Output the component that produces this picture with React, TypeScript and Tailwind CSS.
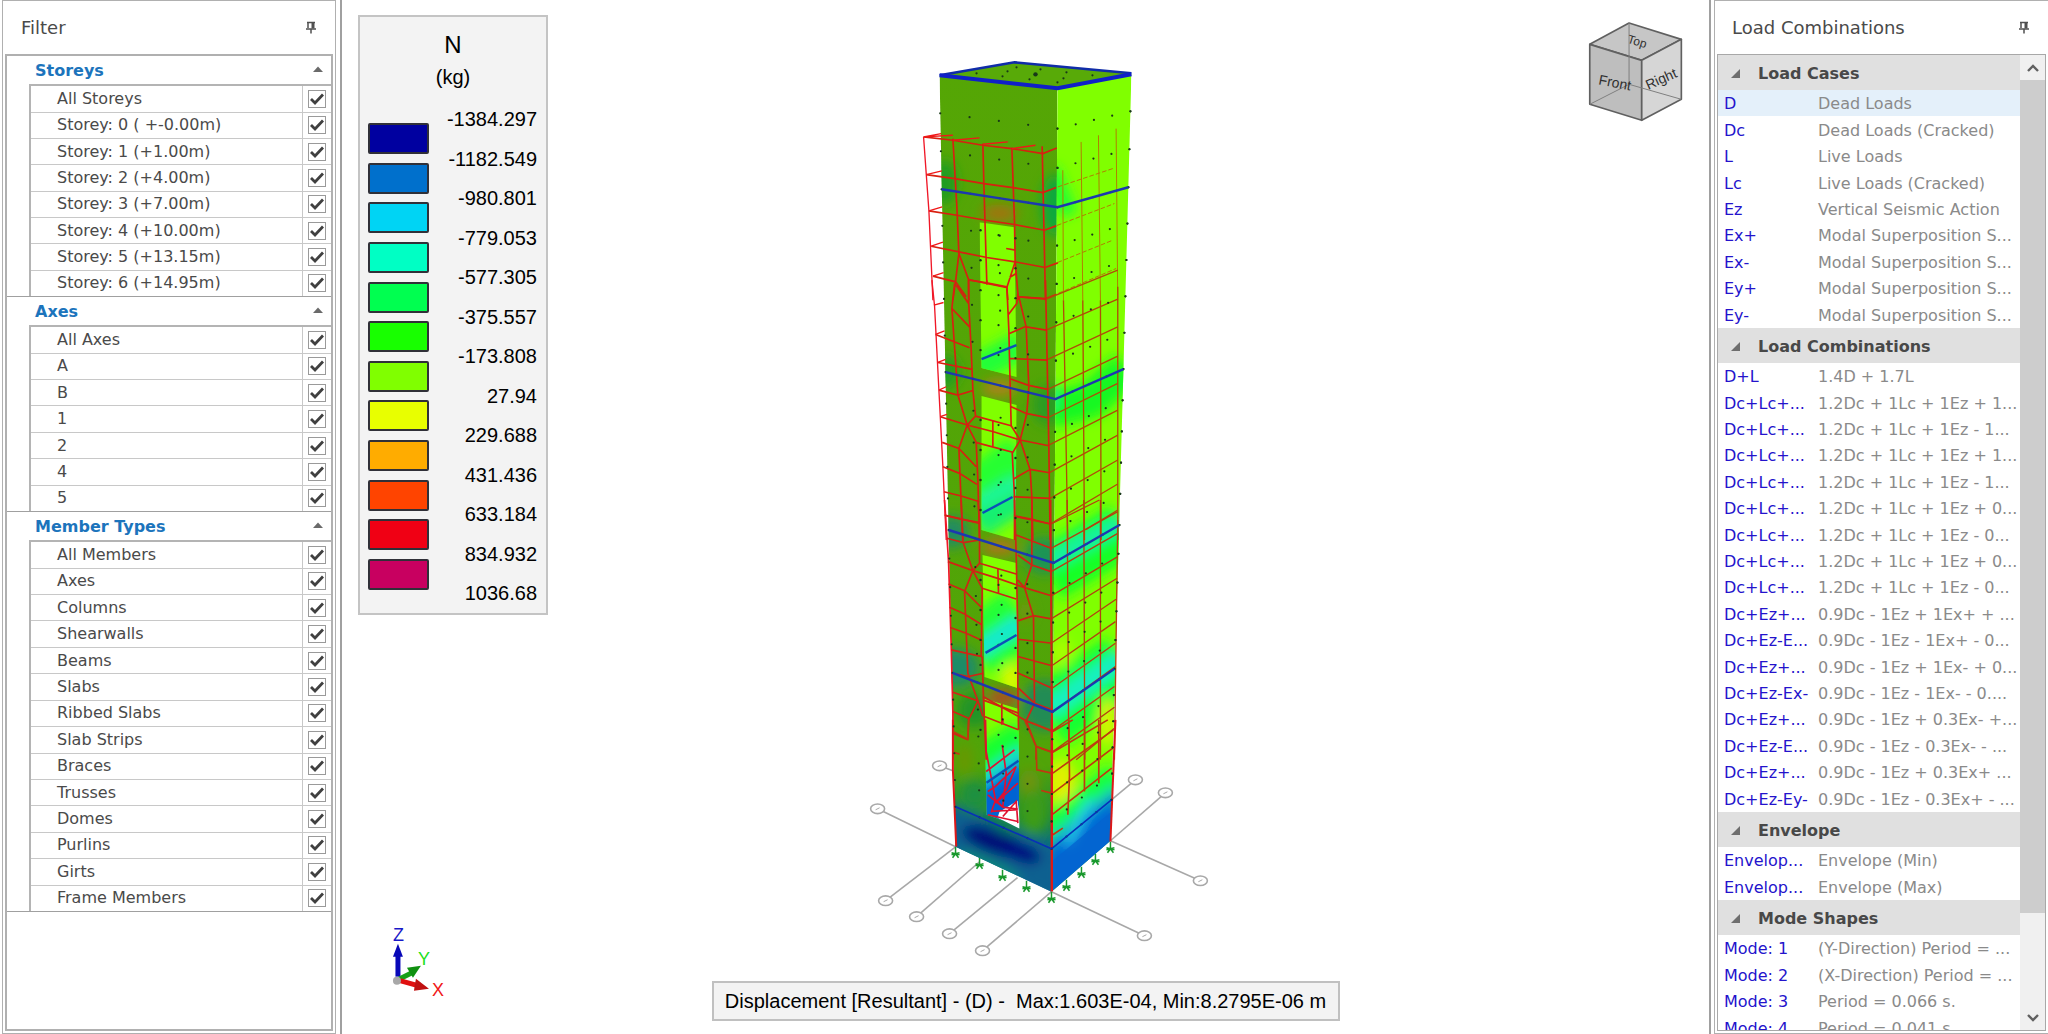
import React from "react";

const storeys = [
  "All Storeys",
  "Storey: 0 ( +-0.00m)",
  "Storey: 1 (+1.00m)",
  "Storey: 2 (+4.00m)",
  "Storey: 3 (+7.00m)",
  "Storey: 4 (+10.00m)",
  "Storey: 5 (+13.15m)",
  "Storey: 6 (+14.95m)",
];
const axes = ["All Axes", "A", "B", "1", "2", "4", "5"];
const members = [
  "All Members",
  "Axes",
  "Columns",
  "Shearwalls",
  "Beams",
  "Slabs",
  "Ribbed Slabs",
  "Slab Strips",
  "Braces",
  "Trusses",
  "Domes",
  "Purlins",
  "Girts",
  "Frame Members",
];

type Pair = [string, string];
const loadCases: Pair[] = [
  ["D", "Dead Loads"],
  ["Dc", "Dead Loads (Cracked)"],
  ["L", "Live Loads"],
  ["Lc", "Live Loads (Cracked)"],
  ["Ez", "Vertical Seismic Action"],
  ["Ex+", "Modal Superposition S..."],
  ["Ex-", "Modal Superposition S..."],
  ["Ey+", "Modal Superposition S..."],
  ["Ey-", "Modal Superposition S..."],
];
const combos: Pair[] = [
  ["D+L", "1.4D + 1.7L"],
  ["Dc+Lc+...", "1.2Dc + 1Lc + 1Ez + 1..."],
  ["Dc+Lc+...", "1.2Dc + 1Lc + 1Ez - 1..."],
  ["Dc+Lc+...", "1.2Dc + 1Lc + 1Ez + 1..."],
  ["Dc+Lc+...", "1.2Dc + 1Lc + 1Ez - 1..."],
  ["Dc+Lc+...", "1.2Dc + 1Lc + 1Ez + 0..."],
  ["Dc+Lc+...", "1.2Dc + 1Lc + 1Ez - 0..."],
  ["Dc+Lc+...", "1.2Dc + 1Lc + 1Ez + 0..."],
  ["Dc+Lc+...", "1.2Dc + 1Lc + 1Ez - 0..."],
  ["Dc+Ez+...", "0.9Dc - 1Ez + 1Ex+ + ..."],
  ["Dc+Ez-E...", "0.9Dc - 1Ez - 1Ex+ - 0..."],
  ["Dc+Ez+...", "0.9Dc - 1Ez + 1Ex- + 0..."],
  ["Dc+Ez-Ex-", "0.9Dc - 1Ez - 1Ex- - 0...."],
  ["Dc+Ez+...", "0.9Dc - 1Ez + 0.3Ex- +..."],
  ["Dc+Ez-E...", "0.9Dc - 1Ez - 0.3Ex- - ..."],
  ["Dc+Ez+...", "0.9Dc - 1Ez + 0.3Ex+ ..."],
  ["Dc+Ez-Ey-", "0.9Dc - 1Ez - 0.3Ex+ - ..."],
];
const envelopes: Pair[] = [
  ["Envelop...", "Envelope (Min)"],
  ["Envelop...", "Envelope (Max)"],
];
const modes: Pair[] = [
  ["Mode: 1", "(Y-Direction) Period = ..."],
  ["Mode: 2", "(X-Direction) Period = ..."],
  ["Mode: 3", "Period = 0.066 s."],
  ["Mode: 4", "Period = 0.041 s."],
];

function PinButton({ label }: { label: string }) {
  return (
    <button type="button" aria-label={label} className="flex size-4 items-center justify-center">
      <svg viewBox="0 0 12 13" className="h-[13px] w-3" fill="none" stroke="#505050">
        <path d="M3 1v6M2 1.5h8M1 8h10M6 8v4.5" strokeWidth="1.5" />
        <path d="M8 1v6.5" strokeWidth="3" />
      </svg>
    </button>
  );
}

function PanelTitle({ title, pad }: { title: string; pad: string }) {
  return (
    <header className={"flex h-[53px] shrink-0 items-center justify-between text-lg text-[#4a4a4a] " + pad}>
      <h2>{title}</h2>
      <PinButton label={"Pin " + title} />
    </header>
  );
}

function FilterSection({ title, items, bodyHeight }: { title: string; items: string[]; bodyHeight: string }) {
  return (
    <section className="border-b border-[#a0a0a0]">
      <button type="button" aria-expanded="true" className="flex h-7 w-full items-center justify-between pt-0.5 pr-2 pl-7">
        <span className="text-base font-bold text-[#1c74bc]">{title}</span>
        <svg viewBox="0 0 10 6" className="mb-1 h-1.5 w-2.5">
          <path d="M0 6 5 0.5 10 6z" fill="#6a6a6a" />
        </svg>
      </button>
      <div className="pl-[22px]">
        <table className={"w-full border-t-2 border-l-2 border-[#b4b4b4] " + bodyHeight}>
          <tbody>
            {items.map((name, i) => {
              const id = title.replace(" ", "-") + "-" + i;
              return (
                <tr key={id} className="border-t border-[#c8c8c8] first:border-t-0">
                  <th scope="row" className="p-0 pl-[26px] text-left text-base leading-5 font-normal whitespace-pre text-[#4a4a4a]">
                    <label htmlFor={id}>{name}</label>
                  </th>
                  <td className="w-[29px] border-l border-[#c8c8c8] p-0">
                    <span className="grid place-items-center">
                      <input
                        id={id}
                        type="checkbox"
                        defaultChecked
                        className="peer col-start-1 row-start-1 size-[18px] appearance-none border border-[#9a9a9a] bg-white"
                      />
                      <svg viewBox="0 0 14 12" className="pointer-events-none invisible col-start-1 row-start-1 h-3 w-3.5 peer-checked:visible">
                        <path d="M1 6 5 10 13 1.5" fill="none" stroke="#404040" strokeWidth="2.8" />
                      </svg>
                    </span>
                  </td>
                </tr>
              );
            })}
          </tbody>
        </table>
      </div>
    </section>
  );
}

function LoadSection({ title, items, bodyHeight, active }: { title: string; items: Pair[]; bodyHeight: string; active?: number }) {
  return (
    <section>
      <button type="button" aria-expanded="true" className="flex h-[35px] w-full items-center gap-[18px] bg-[#e0e0e0] pt-0.5 pl-[13px]">
        <svg viewBox="0 0 9 9" className="size-[9px]">
          <path d="M9 0v9H0z" fill="#6e6e6e" />
        </svg>
        <span className="text-base font-bold text-[#484848]">{title}</span>
      </button>
      <table className={"w-full table-fixed " + bodyHeight}>
        <tbody>
          {items.map(([code, text], i) => (
            <tr key={i} className={i === active ? "bg-[#e4f0fa]" : ""}>
              <th scope="row" className="w-[99px] p-0 pt-0.5 pl-1.5 text-left text-base leading-5 font-normal whitespace-nowrap text-[#2413cc]">
                {code}
              </th>
              <td className="overflow-hidden p-0 pt-0.5 pl-px text-base leading-5 whitespace-nowrap text-[#8a8a8a]">{text}</td>
            </tr>
          ))}
        </tbody>
      </table>
    </section>
  );
}

const swatches = [
  "bg-[#0000a0]",
  "bg-[#0070cc]",
  "bg-[#00d4f4]",
  "bg-[#00ffc4]",
  "bg-[#00ff50]",
  "bg-[#18ff00]",
  "bg-[#80ff00]",
  "bg-[#e8ff00]",
  "bg-[#ffac00]",
  "bg-[#ff4400]",
  "bg-[#f00014]",
  "bg-[#c80060]",
];
const values = [
  "-1384.297",
  "-1182.549",
  "-980.801",
  "-779.053",
  "-577.305",
  "-375.557",
  "-173.808",
  "27.94",
  "229.688",
  "431.436",
  "633.184",
  "834.932",
  "1036.68",
];

function Legend() {
  return (
    <aside className="absolute top-[15px] left-4 w-[190px] border-2 border-[#c4c4c4] bg-[#f3f3f3] pb-2 text-black">
      <div className="flex flex-col items-center pt-3.5">
        <span className="text-2xl leading-7">N</span>
        <span className="text-xl leading-9">(kg)</span>
      </div>
      <div className="flex h-[510px] justify-between pr-[9px] pl-2">
        <div className="flex flex-col justify-between pt-[28px] pb-[15px]">
          {swatches.map((c) => (
            <span key={c} className={"h-[31px] w-[61px] rounded-xs border-2 border-[#303038] " + c} />
          ))}
        </div>
        <div className="flex flex-col justify-between pt-3 text-right text-xl leading-6">
          {values.map((v) => (
            <span key={v}>{v}</span>
          ))}
        </div>
      </div>
    </aside>
  );
}

type P = [number, number];
const mix = (a: P, b: P, t: number): P => [a[0] + (b[0] - a[0]) * t, a[1] + (b[1] - a[1]) * t];
/* Storey levels as left edge, front corner and right edge points. */
const levels: P[][] = [
  [[940, 75], [1058, 89], [1132, 73]],
  [[942, 189], [1058, 207], [1129, 187]],
  [[946, 372], [1056, 399], [1124, 369]],
  [[949, 530], [1054, 563], [1120, 525]],
  [[953, 673], [1053, 712], [1115, 669]],
  [[956, 807], [1052, 849], [1112, 800]],
];
const divisions = [3, 5, 5, 5, 5];

function nodeDots() {
  const dots: P[] = [];
  for (let i = 0; i < 5; i++) {
    for (let k = 1; k <= divisions[i]; k++) {
      const t = k / divisions[i];
      const l = mix(levels[i][0], levels[i + 1][0], t);
      const c = mix(levels[i][1], levels[i + 1][1], t);
      const r = mix(levels[i][2], levels[i + 1][2], t);
      for (let j = 0; j < 5; j++) {
        dots.push(mix(l, c, j / 4));
        dots.push(mix(c, r, j / 4));
      }
      dots.push(r);
    }
  }
  return dots;
}

const supports: P[] = [
  [956, 847], [980, 858], [1003, 870], [1027, 881], [1052, 892], [1067, 880], [1082, 867], [1096, 854], [1111, 842],
];
const gridLines: [number, number, number, number][] = [
  [956, 847, 886, 901], [980, 862, 917, 917], [1018, 878, 950, 934], [1052, 892, 983, 951],
  [956, 847, 878, 809], [1052, 892, 1145, 936], [1111, 841, 1201, 881], [1111, 841, 1166, 793],
  [1112, 800, 1136, 780], [956, 772, 940, 766],
];

function Tower() {
  return (
    <g>
      <g stroke="#a8a8a8" fill="none" strokeWidth="1.6">
        {gridLines.map((g, i) => (
          <g key={i}>
            <line x1={g[0]} y1={g[1]} x2={g[2]} y2={g[3]} />
            <ellipse cx={g[2]} cy={g[3]} rx="7" ry="4.8" fill="#fff" />
            <path d={`M${g[2] - 2} ${g[3] + 1}l4 -2`} strokeWidth="1" />
          </g>
        ))}
      </g>
      <g stroke="#18982c" strokeWidth="1.5" fill="none">
        {supports.map(([x, y], i) => (
          <path key={i} d={`M${x} ${y}v8M${x - 4} ${y + 6}l8 2M${x + 4} ${y + 6}l-8 2M${x} ${y + 7}l-3 4M${x} ${y + 7}l3 4`} />
        ))}
      </g>

      <polygon points="940,75 1015,62 1132,73 1058,89" fill="#58aa08" />
      <g clipPath="url(#leftFace)">
        <rect x="930" y="60" width="140" height="840" fill="url(#leftGrad)" />
        <g filter="url(#soft)">
          <ellipse cx="945" cy="182" rx="12" ry="22" fill="#1f9c20" />
          <ellipse cx="1056" cy="205" rx="14" ry="30" fill="#10a83c" />
          <ellipse cx="1000" cy="213" rx="18" ry="9" fill="#a07410" />
          <ellipse cx="946" cy="372" rx="14" ry="16" fill="#249c20" />
          <ellipse cx="1050" cy="405" rx="18" ry="20" fill="#2c9c20" />
          <ellipse cx="1000" cy="388" rx="18" ry="9" fill="#a88414" />
          <ellipse cx="953" cy="532" rx="16" ry="16" fill="#208c60" />
          <ellipse cx="1045" cy="556" rx="20" ry="18" fill="#1c9454" />
          <ellipse cx="1000" cy="547" rx="18" ry="9" fill="#a87818" />
          <ellipse cx="956" cy="668" rx="24" ry="20" fill="#1c8c68" />
          <ellipse cx="975" cy="710" rx="18" ry="18" fill="#209428" />
          <ellipse cx="1045" cy="706" rx="24" ry="26" fill="#208c54" />
          <ellipse cx="1003" cy="698" rx="16" ry="8" fill="#b04c20" />
          <ellipse cx="1026" cy="612" rx="6" ry="10" fill="#7c9008" />
          <ellipse cx="1030" cy="785" rx="10" ry="16" fill="#709408" />
          <ellipse cx="965" cy="760" rx="8" ry="16" fill="#689800" />
          <ellipse cx="975" cy="795" rx="14" ry="14" fill="#1c9040" />
          <ellipse cx="1034" cy="812" rx="14" ry="22" fill="#3c9c18" />
          <polygon points="940,800 985,818 1060,850 1060,900 940,850" fill="#086090" />
          <ellipse cx="1003" cy="832" rx="14" ry="7" fill="#108060" />
          <ellipse cx="995" cy="842" rx="34" ry="12" fill="#001078" transform="rotate(20 995 842)" />
          <ellipse cx="1022" cy="853" rx="20" ry="9" fill="#000080" transform="rotate(20 1022 853)" />
          <ellipse cx="990" cy="866" rx="34" ry="7" fill="#0c8878" transform="rotate(25 990 866)" />
        </g>
      </g>
      <g clipPath="url(#rightFace)">
        <rect x="1045" y="60" width="100" height="840" fill="#80ff00" />
        <g filter="url(#soft)" fill="none">
          <path d="M1052 195 1068 188" stroke="#20ff30" strokeWidth="50" />
          <path d="M1048 410 1092 400 1128 368" stroke="#18f820" strokeWidth="36" />
          <path d="M1050 385v24" stroke="#20f088" strokeWidth="14" />
          <path d="M1048 575 1124 530" stroke="#18ff28" strokeWidth="56" />
          <path d="M1048 562 1124 522" stroke="#18f0a0" strokeWidth="18" />
          <path d="M1048 718 1124 665" stroke="#18ff30" strokeWidth="66" />
          <path d="M1048 710 1124 658" stroke="#18f0c0" strokeWidth="22" />
          <ellipse cx="1108" cy="722" rx="9" ry="24" fill="#d4f400" />
          <ellipse cx="1062" cy="782" rx="14" ry="22" fill="#e0f000" />
          <ellipse cx="1062" cy="652" rx="10" ry="14" fill="#a8ff00" />
          <path d="M1048 834 1118 776" stroke="#18ff40" strokeWidth="30" />
          <path d="M1048 844 1118 790" stroke="#18c8b8" strokeWidth="12" />
          <polygon points="1045,850 1120,792 1120,860 1050,905" fill="#0468d4" />
          <path d="M1092 800 1068 846" stroke="#20c8ec" strokeWidth="8" />
        </g>
        <polygon points="1052,862 1112,812 1112,845 1052,895" fill="#0464d0" opacity=".8" />
      </g>

      <g clipPath="url(#openings)">
        <rect x="975" y="200" width="50" height="640" fill="#80ff00" />
        <g filter="url(#soft)" fill="none">
          <path d="M975 370 1022 345" stroke="#20ff38" strokeWidth="28" />
          <path d="M975 490 1022 455" stroke="#28ff30" strokeWidth="44" />
          <path d="M975 520 1022 490" stroke="#18f070" strokeWidth="40" />
          <path d="M975 505 1022 480" stroke="#20f8a0" strokeWidth="10" />
          <path d="M975 650 1022 615" stroke="#20ff38" strokeWidth="60" />
          <path d="M975 653 1022 622" stroke="#18e8d0" strokeWidth="18" />
          <ellipse cx="1012" cy="680" rx="10" ry="16" fill="#d8f800" />
          <path d="M975 765 1025 735" stroke="#18ff30" strokeWidth="32" />
          <path d="M975 788 1025 752" stroke="#18d8d0" strokeWidth="16" />
          <polygon points="970,796 1030,756 1030,840 970,840" fill="#0464d4" />
        </g>
        <polygon points="1000,812 1018,801 1022,830 998,818" fill="#fff" />
      </g>

      <g transform="translate(900 40) scale(.33333)" fill="none" stroke="#d82010" strokeWidth="5">
        <g stroke="#b08000" strokeWidth="3">
          <path d="M490 390 492 780M545 305 550 780M597 285 603 780M650 265 655 780" />
          <path d="M475 440 640 385M435 570 645 490M437 682 640 600M440 775 650 685" strokeDasharray="14 6" />
        </g>
        <path d="M160 295 172 500 178 640 207 718 208 780M250 310 253 430 262 733M337 322 345 545 347 665 357 780M428 318 438 780" />
        <path d="M72 290 160 300 250 315 337 325 430 340 472 323M80 403 165 415 253 430 340 442 430 457 470 442M88 512 172 525 258 540 345 553 435 570 470 557M95 618 178 635 262 652 347 665 437 682 475 668M100 708 168 725 200 770M178 640 168 725 160 780M207 718 262 730 322 742 347 665M322 742 325 780M330 712 350 700M320 625 348 630M357 770 440 775 470 763" />
        <path d="M72 290 125 280M72 290 160 285M160 300 240 293M250 312 325 305M337 325 408 315M80 403 127 392M88 512 128 500M95 618 130 606M100 708 132 697" stroke="#f01818" strokeWidth="4" />
        <path d="M72 290 88 512 100 780" stroke="#f01828" strokeWidth="4" />
      </g>

      <g transform="translate(900 280) scale(.33333)" fill="none" stroke="#d82010" strokeWidth="5">
        <g stroke="#b04c08" strokeWidth="4">
          <path d="M492 60 505 780M550 60 555 780M603 60 605 780M655 20 655 780" />
          <path d="M440 57 655 -30M440 150 655 57M440 240 655 140M445 328 655 228M445 413 655 310M445 497 655 390M450 578 655 465M452 655 655 540M452 732 655 612M560 748 655 690" />
        </g>
        <path d="M165 10 157 85 165 200 175 345 203 435 230 487 235 600 240 780M203 435 178 505 187 720 190 780M207 60 215 210 220 330 228 408 203 435M207 0 207 70 170 15M157 85 210 140M108 163 210 203M115 247 218 268M118 330 175 345 218 332M122 410 203 435 282 455 362 480 448 497M128 487 178 505 230 560M130 560 180 580 232 613M133 635 185 648 240 665M138 707 188 718 240 728" />
        <path d="M322 20 328 150 332 320 335 437 362 480 392 570 397 650 400 780M358 50 380 140 388 320 382 400 362 480M358 50 440 57M380 140 440 150M330 160 380 138M330 235 443 240M330 295 385 315 445 328M335 380 380 400 445 413M392 568 450 578M342 597 392 568M342 650 452 655M348 708 398 718 452 732M325 105 352 70 355 40" />
        <path d="M228 408 335 437M228 487 340 517 362 480M280 420 280 503M338 517 345 650 345 780M262 0 262 12M210 0 262 8 322 20" />
        <path d="M438 0 443 240 448 497 452 780" />
        <path d="M97 0 105 78 118 330 130 560 140 780" stroke="#f01828" strokeWidth="4" />
        <path d="M103 75 132 67M108 163 135 152M115 247 138 238M118 330 140 320M122 410 142 403" stroke="#f01818" strokeWidth="4" />
      </g>

      <g transform="translate(900 500) scale(.33333)" fill="none" stroke="#d02414" strokeWidth="5">
        <g stroke="#b44010" strokeWidth="4">
          <path d="M503 0 508 780M553 0 556 780M603 0 603 780M655 60 645 780" />
          <path d="M455 72 600 0M455 145 655 35M455 215 655 100M455 288 655 170M455 357 653 235M455 430 650 298M458 497 648 365M458 565 648 430M458 637 648 500M458 693 645 560M458 757 645 622M530 780 645 685" />
        </g>
        <path d="M135 0 147 185 155 440 160 640 160 780" stroke="#f01828" />
        <path d="M185 0 190 125 220 212 248 265 245 470M220 212 195 275 205 520 235 603 250 650M220 212 240 190 240 60 235 0M135 45 240 70M142 115 192 128 240 120M145 185 220 212 297 236 375 263 458 288M147 252 195 272 245 322M150 322 195 342 248 375M152 383 200 400 248 422M155 450 248 470M160 520 205 530 252 520M160 577 235 603M235 603 207 660 205 720M160 635 207 655M160 700 205 720" />
        <path d="M345 0 350 160 355 400 355 560 357 690M350 50 397 60 455 72M350 105 455 145M355 165 397 195 455 215M397 0 397 195 375 263 402 350 405 610 380 663 410 740 410 780M355 240 375 263M357 362 402 347 455 357M357 418 458 430M355 470 455 497M357 520 458 565M357 565 405 610 458 630M250 590 380 663M410 740 458 757M380 663 458 693" />
        <path d="M240 190 350 222M248 265 350 297M295 205 297 280M250 600 357 640M255 650 357 690M307 612 307 675M248 470 252 600 260 780" />
        <path d="M453 0 458 780" strokeWidth="6" />
      </g>

      <g transform="translate(860 720) scale(.33333)" fill="none" stroke="#dc1818" strokeWidth="5">
        <path d="M280 0 280 150 290 380" strokeWidth="6" />
        <g stroke="#c03810">
          <path d="M628 0 630 170 625 285M675 0 675 215M718 0 718 190" />
          <path d="M580 35 640 0M580 97 745 0M580 160 762 30M580 220 760 85M580 283 757 145M580 345 610 325" />
          <path d="M280 35 325 58 328 0M280 97 300 103M495 0 530 80 532 150 577 160M530 80 577 97M520 10 577 35M545 212 577 220" />
        </g>
        <path d="M378 0 380 95 408 240 395 278M430 0 430 12M428 75 440 160 430 260M385 215 408 200 470 140M380 155 465 90M475 190 408 250 440 210 470 140M385 285 475 305M395 275 475 270M430 290 470 245 475 310M408 240 430 262 475 268M385 225 430 262" stroke="#e01030" />
        <path d="M577 0 577 515" strokeWidth="7" />
        <path d="M768 0 753 365" strokeWidth="6" />
      </g>

      <g fill="#183818">
        {nodeDots().map(([x, y], i) => (
          <circle key={i} cx={x} cy={y} r="1.1" />
        ))}
        {[[977, 73], [1003, 76], [1017, 67], [1041, 69], [1067, 72], [1093, 75], [1064, 78], [1030, 79], [1008, 71], [1058, 82]].map(([x, y]) => (
          <circle key={x} cx={x} cy={y} r="1.1" />
        ))}
        {[230, 260, 290, 320, 350, 420, 450, 480, 510, 580, 610, 640, 665, 730].map((y) => (
          <g key={y}>
            <circle cx="981" cy={y} r="1.2" />
            <circle cx="999" cy={y + 5} r="1.1" />
            <circle cx="1016" cy={y + 8} r="1.2" />
          </g>
        ))}
        <circle cx="1036" cy="74" r="2.2" />
      </g>

      <g fill="none" stroke="#1c38b0" strokeWidth="2.4">
        {levels.slice(1, 5).map((l, i) => (
          <polyline key={i} points={l.map((p) => p.join(",")).join(" ")} />
        ))}
        <polyline points="956,807 1052,849 1112,800" stroke="#0830b8" strokeWidth="1.6" />
        <path d="M982 359 1017 345M983 513 1013 497M986 653 1017 635M987 783 1019 761" stroke="#0c50b8" />
        <path d="M940 75 1015 62 1132 73" stroke="#102ca8" strokeWidth="2.6" />
        <path d="M940 75 1058 88 1132 74" stroke="#1020c8" strokeWidth="4" />
      </g>
    </g>
  );
}

function AxisTriad() {
  return (
    <g className="font-['Liberation_Sans',Arial,sans-serif] text-lg">
      <path d="M398 977V952" stroke="#0808b8" strokeWidth="5" />
      <polygon points="393,957 398,944 403,957" fill="#0808b8" />
      <path d="M398 980 412 973" stroke="#18a018" strokeWidth="5" />
      <polygon points="407,968 421,966 413,978" fill="#109010" />
      <path d="M400 981 418 986" stroke="#e01010" strokeWidth="5" />
      <polygon points="416,979 429,989 414,991" fill="#c01010" />
      <circle cx="397" cy="981" r="4" fill="#a8a8a8" />
      <text x="393" y="941" fill="#1818c8">Z</text>
      <text x="418" y="965" fill="#20e020">Y</text>
      <text x="432" y="996" fill="#f01818">X</text>
    </g>
  );
}

function ViewCube() {
  return (
    <g>
      <g transform="translate(1570 10) scale(.33333)" stroke="#606060" strokeWidth="5" strokeLinejoin="round">
        <polygon points="62,102 180,38 337,87 218,150" fill="#c6c6c6" />
        <polygon points="62,102 218,150 218,330 62,282" fill="#bebebe" />
        <polygon points="218,150 337,87 337,267 218,330" fill="#d6d6d6" />
        <path d="M180 38 180 222 62 282M180 222 337 267" fill="none" stroke="#808080" strokeWidth="3" />
      </g>
      <g className="font-['Liberation_Sans',Arial,sans-serif]" fill="#303030" textAnchor="middle">
        <text transform="translate(1615 87) rotate(11)" className="text-sm">Front</text>
        <text transform="translate(1664 83) rotate(-24)" className="text-sm">Right</text>
        <text transform="translate(1637 45) rotate(17)" className="text-xs">Top</text>
      </g>
    </g>
  );
}

function Viewport() {
  return (
    <svg viewBox="342 0 1368 1034" className="size-full" role="img" aria-label="Structural model">
      <defs>
        <filter id="soft" x="-30%" y="-30%" width="160%" height="160%">
          <feGaussianBlur stdDeviation="6" />
        </filter>
        <linearGradient id="leftGrad" x1="0" y1="0" x2="0" y2="1">
          <stop offset="0" stopColor="#55a605" />
          <stop offset=".84" stopColor="#50a408" />
          <stop offset=".9" stopColor="#208c38" />
          <stop offset=".95" stopColor="#086890" />
          <stop offset="1" stopColor="#087090" />
        </linearGradient>
        <clipPath id="leftFace">
          <polygon points="940,75 1058,89 1056,399 1052,892 956,847 949,530" />
        </clipPath>
        <clipPath id="rightFace">
          <polygon points="1058,89 1132,73 1124,369 1111,841 1052,892 1056,399" />
        </clipPath>
        <clipPath id="openings">
          <polygon points="980,222 1015,227 1017,377 982,368" />
          <polygon points="982,396 1017,405 1016,540 982,530" />
          <polygon points="983,555 1017,563 1018,688 985,677" />
          <polygon points="985,699 1019,709 1020,829 1004,821 987,815" />
        </clipPath>
      </defs>
      <Tower />
      <AxisTriad />
      <ViewCube />
    </svg>
  );
}

export default function App() {
  return (
    <div className="flex h-screen overflow-hidden bg-white font-['DejaVu_Sans',Tahoma,sans-serif]">
      <aside className="flex w-[342px] shrink-0 border-r-2 border-[#a0a0a0] pr-1 pl-0.5">
        <div className="flex min-w-0 flex-1 flex-col border border-[#b0b0b0] px-0.5 pb-0.5">
          <PanelTitle title="Filter" pad="pl-4 pr-3.5" />
          <div className="min-h-0 flex-1 border-2 border-[#b0b0b0]">
            <FilterSection title="Storeys" items={storeys} bodyHeight="h-[212px]" />
            <FilterSection title="Axes" items={axes} bodyHeight="h-[186px]" />
            <FilterSection title="Member Types" items={members} bodyHeight="h-[371px]" />
          </div>
        </div>
      </aside>

      <main className="relative min-w-0 flex-1 font-['Liberation_Sans',Arial,sans-serif]">
        <Viewport />
        <Legend />
        <output className="absolute bottom-[13px] left-1/2 flex h-10 w-[628px] -translate-x-1/2 items-center justify-center border-2 border-[#c0c0c0] bg-[#f3f3f3] text-xl whitespace-pre text-black">
          {"Displacement [Resultant] - (D) -  Max:1.603E-04, Min:8.2795E-06 m"}
        </output>
      </main>

      <aside className="flex w-[339px] shrink-0 border-l-2 border-[#a0a0a0] pl-[3px]">
        <div className="flex min-w-0 flex-1 flex-col border-t border-b border-l border-[#b0b0b0] pr-0.5 pb-0.5 pl-0.5">
          <PanelTitle title="Load Combinations" pad="pl-[15px] pr-3.5" />
          <div className="flex min-h-0 flex-1 border border-[#a8a8a8]">
            <div className="min-w-0 flex-1 overflow-hidden">
              <LoadSection title="Load Cases" items={loadCases} bodyHeight="h-[238px]" active={0} />
              <LoadSection title="Load Combinations" items={combos} bodyHeight="h-[449px]" />
              <LoadSection title="Envelope" items={envelopes} bodyHeight="h-[53px]" />
              <LoadSection title="Mode Shapes" items={modes} bodyHeight="h-[106px]" />
            </div>
            <div className="flex w-[25px] shrink-0 flex-col bg-[#f0f0f0]">
              <button type="button" aria-label="Scroll up" className="flex h-[25px] items-center justify-center">
                <svg viewBox="0 0 12 8" className="h-2 w-3"><path d="M1 7 6 2 11 7" fill="none" stroke="#606060" strokeWidth="2.4" /></svg>
              </button>
              <div className="flex flex-1 flex-col">
                <div className="h-9/10 bg-[#cdcdcd]" />
              </div>
              <button type="button" aria-label="Scroll down" className="flex h-[25px] items-center justify-center">
                <svg viewBox="0 0 12 8" className="h-2 w-3"><path d="M1 1 6 6 11 1" fill="none" stroke="#606060" strokeWidth="2.4" /></svg>
              </button>
            </div>
          </div>
        </div>
      </aside>
    </div>
  );
}
